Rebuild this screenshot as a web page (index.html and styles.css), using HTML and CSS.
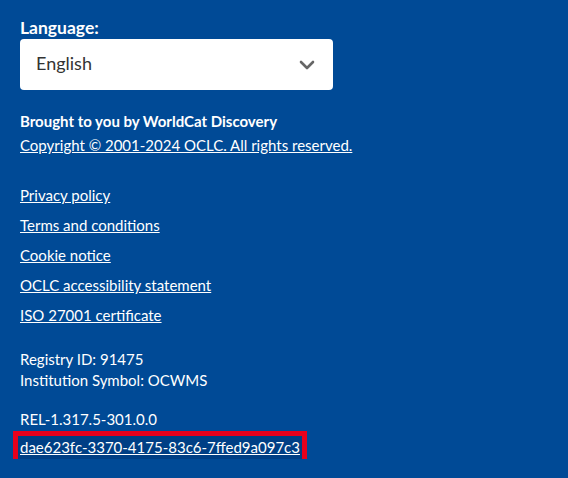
FILE: index.html
```html
<!DOCTYPE html>
<html lang="en">
<head>
<meta charset="utf-8">
<link rel="stylesheet" href="styles.css">
</head>
<body>
<footer class="footer">
  <div class="lang">
    <label class="lang-label" for="lang">Language:</label>
    <div class="select">
      <span class="select-value">English</span>
      <svg class="chevron" width="16" height="10" viewBox="0 0 16 10"><path d="M2 2 L8 8 L14 2" fill="none" stroke="#666" stroke-width="2.6" stroke-linecap="round" stroke-linejoin="round"/></svg>
    </div>
  </div>
  <div class="brought">
    <p class="brought-title">Brought to you by WorldCat Discovery</p>
    <a class="link" href="#">Copyright © 2001-2024 OCLC. All rights reserved.</a>
  </div>
  <ul class="links">
    <li><a class="link" href="#">Privacy policy</a></li>
    <li><a class="link" href="#">Terms and conditions</a></li>
    <li><a class="link" href="#">Cookie notice</a></li>
    <li><a class="link" href="#">OCLC accessibility statement</a></li>
    <li><a class="link" href="#">ISO 27001 certificate</a></li>
  </ul>
  <div class="info">
    <div>Registry ID: 91475</div>
    <div>Institution Symbol: OCWMS</div>
  </div>
  <div class="rel">
    <div>REL-1.317.5-301.0.0</div>
    <a class="link focused" href="#">dae623fc-3370-4175-83c6-7ffed9a097c3</a>
  </div>
</footer>
</body>
</html>
```
FILE: styles.css
```css
html, body {
  margin: 0;
  padding: 0;
  background: #004a96;
}
body {
  font-family: Lato, "Noto Sans", sans-serif;
  color: #ffffff;
}
.footer {
  padding: 17px 20px 0 20px;
  display: flex;
  flex-direction: column;
}
.lang {
  display: flex;
  flex-direction: column;
}
.lang-label {
  font-size: 17.5px;
  font-weight: 700;
  line-height: 22px;
}
.select {
  width: 313px;
  height: 51px;
  box-sizing: border-box;
  background: #fff;
  border-radius: 4px;
  display: flex;
  align-items: center;
  justify-content: space-between;
  padding: 0 18px 3px 16px;
}
.chevron {
  margin-top: 3px;
}
.select-value {
  color: #333;
  font-size: 18px;
}
.brought {
  margin-top: 21px;
  display: flex;
  flex-direction: column;
  align-items: flex-start;
}
.brought-title {
  margin: 0;
  font-size: 15px;
  font-weight: 700;
  line-height: 20px;
}
.brought .link {
  margin-top: 4px;
}
.link {
  color: #fff;
  text-decoration: underline;
  font-size: 15px;
  line-height: 20px;
}
.links {
  list-style: none;
  margin: 30px 0 0 0;
  padding: 0;
  display: flex;
  flex-direction: column;
  gap: 10px;
}
.links li {
  line-height: 20px;
  height: 20px;
}
.info {
  margin-top: 24px;
  font-size: 15px;
  line-height: 21px;
}
.rel {
  margin-top: 18px;
  font-size: 15px;
  line-height: 21px;
  display: flex;
  flex-direction: column;
  align-items: flex-start;
}
.focused {
  display: inline-block;
  margin-top: 6px;
  margin-left: -2px;
  padding: 2px 2px;
  line-height: 19px;
  background: #003f85;
  outline: 5px solid #e8001c;
}
```
